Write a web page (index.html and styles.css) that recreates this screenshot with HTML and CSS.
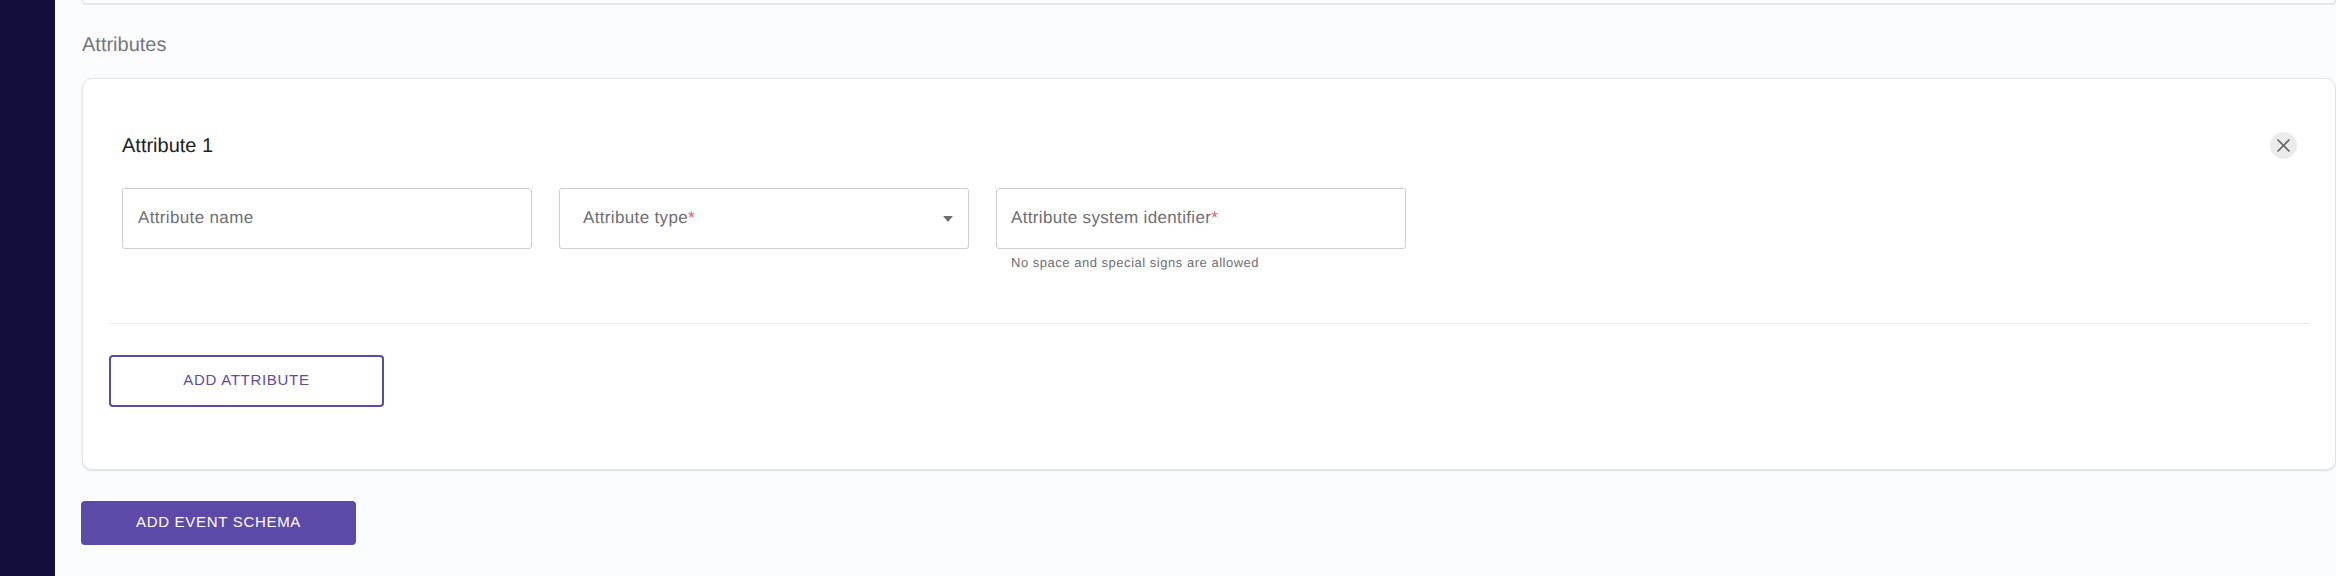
FILE: index.html
```html
<!DOCTYPE html>
<html lang="en">
<head>
<meta charset="utf-8">
<title>Add event schema</title>
<link rel="stylesheet" href="styles.css">
</head>
<body>
<div class="app">
  <aside class="sidebar"></aside>
  <main class="main">
    <div class="prev-card"></div>
    <h2 class="section-title">Attributes</h2>
    <section class="card">
      <div class="attr-head">
        <h3 class="attr-title">Attribute 1</h3>
        <button class="close" type="button" aria-label="Remove">
          <svg width="15" height="15" viewBox="0 0 15 15"><path d="M1.5 1.5l12 12M13.5 1.5l-12 12" fill="none" stroke="#666" stroke-width="1.6"/></svg>
        </button>
      </div>
      <div class="fields">
        <div class="field">
          <div class="box"><span class="label">Attribute name</span></div>
        </div>
        <div class="field">
          <div class="box box-select"><span class="label">Attribute type<em class="req">*</em></span><span class="arrow"></span></div>
        </div>
        <div class="field">
          <div class="box box-tight"><span class="label">Attribute system identifier<em class="req">*</em></span></div>
          <p class="helper">No space and special signs are allowed</p>
        </div>
      </div>
      <hr class="divider">
      <button class="btn-outline" type="button">ADD ATTRIBUTE</button>
    </section>
    <button class="btn-primary" type="button">ADD EVENT SCHEMA</button>
  </main>
</div>
</body>
</html>
```
FILE: styles.css
```css
* { box-sizing: border-box; }
html, body { margin: 0; height: 576px; overflow: hidden; }
body { font-family: "Liberation Sans", Arial, sans-serif; background: #fbfcfe; text-rendering: geometricPrecision; }
.app { display: flex; height: 576px; }
.sidebar { width: 55px; flex: none; background: #130e3b; }
.main { flex: 1; min-width: 0; padding-left: 27px; display: flex; flex-direction: column; align-items: flex-start; }
.prev-card {
  width: 100%; height: 4px; background: #fff;
  border-radius: 0 0 8px 8px;
  border: 1px solid #e2e2e4; border-top: 0;
  box-shadow: 0 1px 1px rgba(0,0,0,.08);
}
.section-title { margin: 31px 0 0; height: 20px; font-size: 20px; line-height: 20px; font-weight: 400; color: #77777b; }
.card {
  width: 100%; height: 392px; margin-top: 23px;
  background: #fff;
  border: 1px solid #e4e4e6;
  border-radius: 10px;
  box-shadow: 0 1px 2px rgba(0,0,0,.12);
  padding: 0 26px;
}
.attr-head { display: flex; align-items: center; justify-content: space-between; height: 28px; margin-top: 52px; padding-left: 13px; padding-right: 12px; }
.attr-title { margin: 0; padding-top: 2px; font-size: 20px; line-height: 28px; font-weight: 400; color: #222; }
.close { width: 27px; height: 27px; padding: 0; border: 0; border-radius: 50%; background: #ebebeb; display: flex; align-items: center; justify-content: center; }
.fields { display: flex; gap: 27px; margin-top: 29px; padding-left: 13px; }
.field { width: 410px; }
.box { height: 61px; border: 1px solid #cfcfcf; border-radius: 3px; background: #fff; padding: 19px 15px 0; display: flex; justify-content: space-between; }
.box-select { padding-left: 23px; padding-right: 15px; }
.box-tight { padding-left: 14px; }
.label { font-size: 17px; line-height: 20px; color: #6e6e72; letter-spacing: .35px; }
.req { font-style: normal; color: #ee5a60; }
.arrow { width: 0; height: 0; margin-top: 8px; border-left: 5.5px solid transparent; border-right: 5.5px solid transparent; border-top: 6px solid #6f6f6f; }
.helper { margin: 7px 0 0; padding-left: 15px; font-size: 13px; line-height: 14px; color: #6e6e72; letter-spacing: .52px; }
.divider { margin: 53px 0 0; border: 0; border-top: 1px solid #ececee; }
.btn-outline {
  display: block; width: 275px; height: 52px; margin-top: 31px; padding: 0 0 3px;
  background: #fff; border: 2px solid #5d4aa8; border-radius: 4px;
  color: #5d4aa8; font: 400 15px "Liberation Sans", Arial, sans-serif; letter-spacing: .7px;
}
.btn-primary {
  width: 275px; height: 44px; margin: 31px 0 0 -1px; padding: 0 0 3px;
  background: #5d4aa8; border: 0; border-radius: 4px;
  color: #fff; font: 400 15px "Liberation Sans", Arial, sans-serif; letter-spacing: .7px;
}
```
